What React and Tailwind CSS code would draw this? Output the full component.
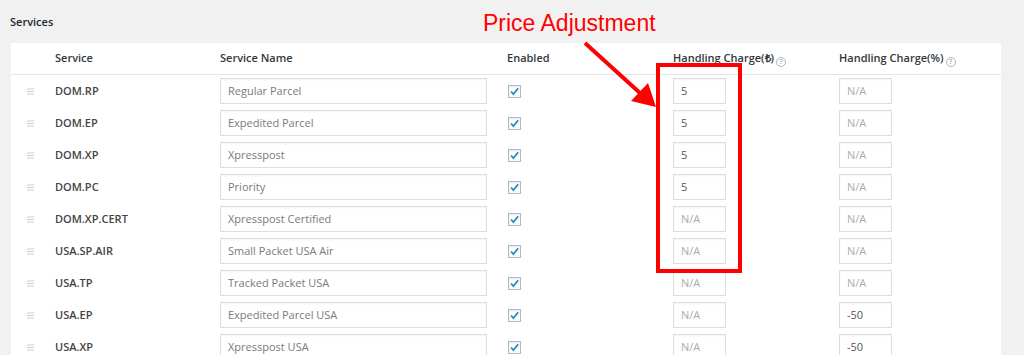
import React from "react";

const rows = [
  { code: "DOM.RP", name: "Regular Parcel", charge: "5", pct: "" },
  { code: "DOM.EP", name: "Expedited Parcel", charge: "5", pct: "" },
  { code: "DOM.XP", name: "Xpresspost", charge: "5", pct: "" },
  { code: "DOM.PC", name: "Priority", charge: "5", pct: "" },
  { code: "DOM.XP.CERT", name: "Xpresspost Certified", charge: "", pct: "" },
  { code: "USA.SP.AIR", name: "Small Packet USA Air", charge: "", pct: "" },
  { code: "USA.TP", name: "Tracked Packet USA", charge: "", pct: "" },
  { code: "USA.EP", name: "Expedited Parcel USA", charge: "", pct: "-50" },
  { code: "USA.XP", name: "Xpresspost USA", charge: "", pct: "-50" },
];

const cols = "grid grid-cols-[44px_165px_287px_166px_166px_1fr] items-center";

function Help() {
  return (
    <span className="inline-flex items-center justify-center w-[10px] h-[10px] ml-[2px] translate-y-[3px] rounded-full border border-[#b5b5b5] text-[7px] leading-none text-[#aaa]">
      ?
    </span>
  );
}

function Handle() {
  return (
    <svg width="7" height="7" viewBox="0 0 7 7" className="ml-4">
      <path d="M0 1h7M0 3.5h7M0 6h7" stroke="#cfcfcf" strokeWidth="1" />
    </svg>
  );
}

function Check() {
  return (
    <div className="w-[13px] h-[13px] ml-px border border-[#b4b9be] bg-white shadow-[inset_0_1px_2px_rgba(0,0,0,0.1)] flex items-center justify-center">
      <svg width="11" height="11" viewBox="0 0 11 11">
        <path d="M2 5.5l2.4 2.6L9.2 2.3" fill="none" stroke="#1e8cbe" strokeWidth="1.8" />
      </svg>
    </div>
  );
}

function Box({ value, className }) {
  return (
    <div
      className={
        "h-[26px] border border-[#dddddd] bg-white shadow-[inset_0_1px_2px_rgba(0,0,0,0.05)] flex items-center px-[7px] text-[11px] " +
        className
      }
    >
      {value}
    </div>
  );
}

export default function App() {
  return (
    <div className="relative h-[355px] overflow-hidden bg-[#f1f1f1] px-[10px] pt-[15px] font-['Open_Sans',sans-serif]">
      <h3 className="text-[11px] leading-[14px] font-semibold text-[#23282d]">Services</h3>

      <div className="mt-[14px] ml-px w-[990px] h-[400px] bg-white">
        <div className={cols + " h-[32px] border-b border-[#e5e5e5] text-[11px] font-semibold text-[#32373c]"}>
          <div />
          <div>Service</div>
          <div>Service Name</div>
          <div>Enabled</div>
          <div className="flex items-center">
            Handling Charge(₺)
            <Help />
          </div>
          <div className="flex items-center">
            Handling Charge(%)
            <Help />
          </div>
        </div>

        {rows.map((r) => (
          <div key={r.code} className={cols + " h-[32px]"}>
            <Handle />
            <div className="text-[11px] font-semibold text-[#444]">{r.code}</div>
            <div>
              <Box value={r.name} className="w-[267px] text-[#7a7a7a]" />
            </div>
            <Check />
            <div>
              <Box
                value={r.charge || "N/A"}
                className={"w-[53px] " + (r.charge ? "text-[#555]" : "text-[#aaa]")}
              />
            </div>
            <div>
              <Box
                value={r.pct || "N/A"}
                className={"w-[53px] " + (r.pct ? "text-[#555]" : "text-[#aaa]")}
              />
            </div>
          </div>
        ))}
      </div>

      {/* annotation */}
      <div className="absolute left-[483px] top-[12px] text-[23px] leading-none text-[#ff0000] font-['Liberation_Sans',Arial,sans-serif]">
        Price Adjustment
      </div>
      <svg className="absolute inset-0 pointer-events-none" width="1024" height="355" viewBox="0 0 1024 355">
        <path d="M585 43L640 93" stroke="#ff0000" strokeWidth="4" />
        <polygon points="656,107 631,101 648,83" fill="#ff0000" />
      </svg>
      <div className="absolute left-[656px] top-[63px] w-[86px] h-[210px] border-4 border-[#ff0000]" />
    </div>
  );
}
